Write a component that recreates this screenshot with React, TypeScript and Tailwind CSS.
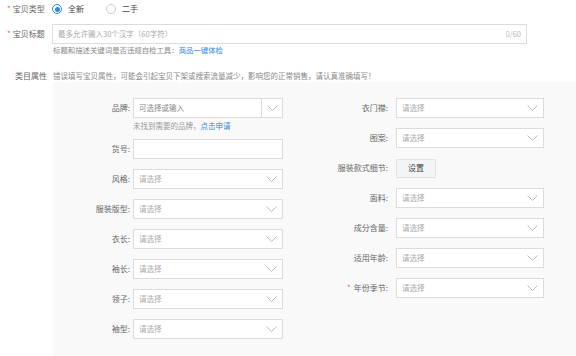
import { FC, ReactNode } from "react";

const Chevron: FC = () => (
  <svg width="11" height="6" viewBox="0 0 11 6" fill="none" aria-hidden="true">
    <path d="M0.5 0.5l5 5 5-5" stroke="#b5b5b5" strokeWidth="0.9" />
  </svg>
);

const Select: FC<{ w: string; text?: string }> = ({ w, text = "请选择" }) => (
  <div className={`flex h-[20px] ${w} items-center justify-between border border-[#dcdcdc] bg-white pl-[5px] pr-[5px]`}>
    <span className="text-[7.5px] text-[#aaa]">{text}</span>
    <Chevron />
  </div>
);

const Row: FC<{ label: ReactNode; labelW: string; gap: string; children: ReactNode }> = ({
  label,
  labelW,
  gap,
  children,
}) => (
  <div className="flex h-[20px] items-center">
    <div className={`${labelW} ${gap} shrink-0 text-right text-[#666]`}>{label}</div>
    {children}
  </div>
);

const App: FC = () => {
  const leftRows = ["风格", "服装版型", "衣长", "袖长", "领子", "袖型"];
  const rightRows = ["面料", "成分含量", "适用年龄"];

  return (
    <div
      className="flex h-[356px] w-[576px] flex-col overflow-hidden bg-white text-[8px] leading-[12px] text-[#666]"
      style={{ fontFamily: '"Noto Sans CJK SC", "Noto Sans", sans-serif' }}
    >
      {/* 宝贝类型 */}
      <div className="flex h-[18px] items-center">
        <div className="w-[52px] pl-[7px]">
          <span className="mr-[2px] text-[#f25e7a]">*</span>宝贝类型
        </div>
        <div className="flex items-center">
          <span className="flex h-[10px] w-[10px] items-center justify-center rounded-full border border-[#3089dc]">
            <span className="h-[5px] w-[5px] rounded-full bg-[#3089dc]" />
          </span>
          <span className="ml-[6px] text-[#444]">全新</span>
          <span className="ml-[22px] h-[10px] w-[10px] rounded-full border border-[#ccc]" />
          <span className="ml-[6px] text-[#444]">二手</span>
        </div>
      </div>

      {/* 宝贝标题 */}
      <div className="mt-[6px] flex h-[20px] items-center">
        <div className="w-[52px] pl-[7px]">
          <span className="mr-[2px] text-[#f25e7a]">*</span>宝贝标题
        </div>
        <div className="flex h-[20px] w-[475px] items-center justify-between border border-[#dcdcdc] px-[5px] text-[7.5px]">
          <span className="text-[#aaa]">最多允许输入30个汉字（60字符）</span>
          <span className="text-[#bbb]">0/60</span>
        </div>
      </div>
      <div className="h-[12px] pl-[53px] text-[7.4px] text-[#888]">
        标题和描述关键词是否违规自检工具：<span className="text-[#3089dc]">商品一键体检</span>
      </div>

      {/* 类目属性 */}
      <div className="mt-[14px] flex h-[12px] items-center">
        <div className="w-[53px] pl-[15px]">类目属性</div>
        <div className="text-[7.5px] text-[#888]">
          错误填写宝贝属性，可能会引起宝贝下架或搜索流量减少，影响您的正常销售，请认真准确填写！
        </div>
      </div>

      <div className="ml-[53px] flex flex-1 bg-[#f9f9f9] pt-[16px]">
        {/* left column */}
        <div className="flex w-[237px] flex-col">
          <Row label="品牌:" labelW="w-[80px]" gap="pr-[3px]">
            <div className="flex h-[20px] w-[150px] items-center border border-[#dcdcdc] bg-white">
              <span className="flex-1 pl-[5px] text-[7.5px] text-[#888]">可选择或输入</span>
              <span className="flex h-full w-[21px] items-center justify-center border-l border-[#dcdcdc]">
                <Chevron />
              </span>
            </div>
          </Row>
          <div className="mt-[2px] h-[12px] pl-[80px] text-[7.5px] text-[#999]">
            未找到需要的品牌，<span className="text-[#3089dc]">点击申请</span>
          </div>
          <div className="mt-[7px] flex flex-col gap-[10px]">
            <Row label="货号:" labelW="w-[80px]" gap="pr-[3px]">
              <div className="h-[20px] w-[150px] border border-[#dcdcdc] bg-white" />
            </Row>
            {leftRows.map((l) => (
              <Row key={l} label={`${l}:`} labelW="w-[80px]" gap="pr-[3px]">
                <Select w="w-[150px]" />
              </Row>
            ))}
          </div>
        </div>

        {/* right column */}
        <div className="flex flex-col gap-[10px]">
          <Row label="衣门襟:" labelW="w-[106px]" gap="pr-[8px]">
            <Select w="w-[148px]" />
          </Row>
          <Row label="图案:" labelW="w-[106px]" gap="pr-[8px]">
            <Select w="w-[148px]" />
          </Row>
          <Row label="服装款式细节:" labelW="w-[106px]" gap="pr-[8px]">
            <div className="flex h-[19px] w-[40px] items-center justify-center rounded-[1px] border border-[#e2e2e2] bg-[#f3f4f6] text-[#444]">
              设置
            </div>
          </Row>
          {rightRows.map((l) => (
            <Row key={l} label={`${l}:`} labelW="w-[106px]" gap="pr-[8px]">
              <Select w="w-[148px]" />
            </Row>
          ))}
          <Row
            label={
              <>
                <span className="mr-[3px] text-[#f25e7a]">*</span>年份季节:
              </>
            }
            labelW="w-[106px]"
            gap="pr-[8px]"
          >
            <Select w="w-[148px]" />
          </Row>
        </div>
      </div>
    </div>
  );
};

export default App;
